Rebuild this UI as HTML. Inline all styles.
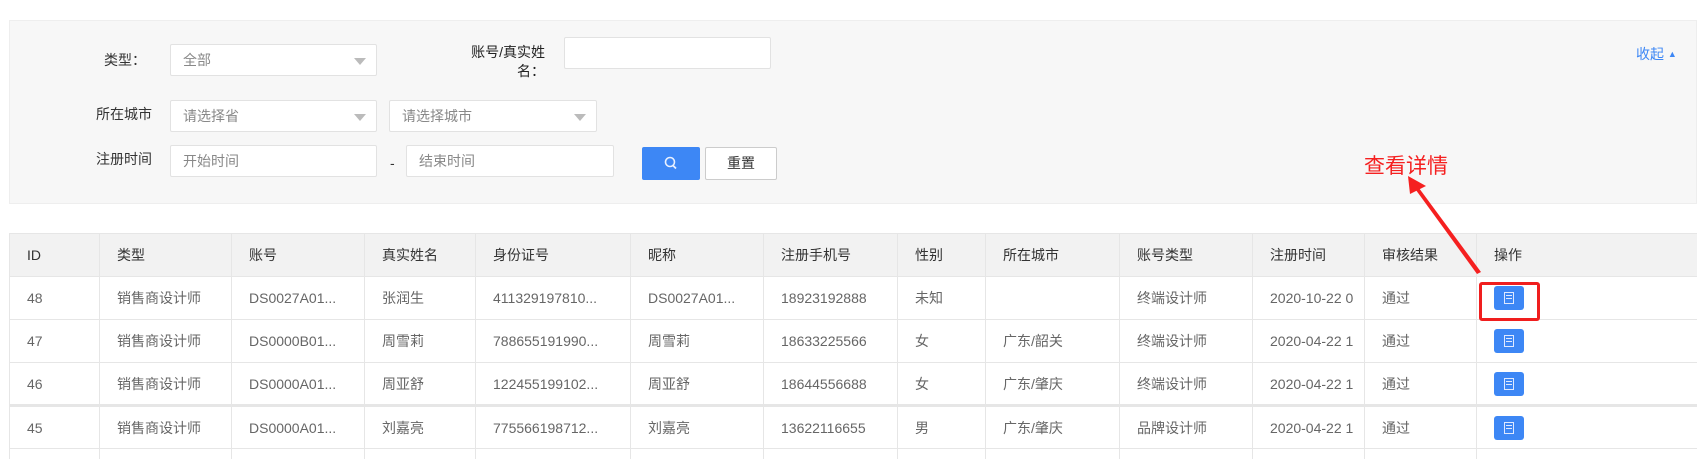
<!DOCTYPE html>
<html><head><meta charset="utf-8"><style>
*{margin:0;padding:0;box-sizing:border-box}
html{width:1702px;height:459px;overflow:hidden}
body{width:1702px;height:459px;background:#fff;font-family:"Liberation Sans","Noto Sans CJK SC",sans-serif;font-size:14px;color:#333;position:relative;overflow:hidden}
.a{position:absolute}
.panel{left:9px;top:20px;width:1688px;height:184px;background:#f7f7f7;border:1px solid #eee}
.lbl{font-size:14px;color:#333;text-align:right}
.inp{background:#fff;border:1px solid #e2e2e2;border-radius:2px;color:#888;font-size:14px;padding-left:12px;display:flex;align-items:center}
.tri{position:absolute;right:10px;top:13px;width:0;height:0;border-left:6px solid transparent;border-right:6px solid transparent;border-top:7px solid #bbb}
.wrap{position:absolute;left:9px;top:233px;width:1688px;height:226px;overflow:hidden}
table{border-collapse:collapse;table-layout:fixed;width:1688px}
td,th{height:43px;border:1px solid #e6e6e6;padding-left:17px;text-align:left;font-weight:normal;white-space:nowrap;overflow:hidden;font-size:14px}
th{background:#f2f2f2;color:#333}
td{color:#666}
tr.last td{height:12px;border-bottom:none}
tr.thick td{border-bottom:3px solid #e6e6e6}
.btn{display:inline-block;width:30px;height:24px;background:#3d87f5;border-radius:3px;position:relative;vertical-align:middle}
.btn i{position:absolute;left:10px;top:6px;width:10px;height:12px;border:1px solid #dfe9ff;background:repeating-linear-gradient(#3d87f5 0 2px,#dfe9ff 2px 3px);background-clip:content-box;padding:2px 1px}
svg{display:block}
</style></head><body>
<div class="a panel"></div>
<div class="a lbl" style="left:100px;top:50px;width:46px">类型：</div>
<div class="a inp" style="left:170px;top:44px;width:207px;height:32px">全部<span class="tri"></span></div>
<div class="a lbl" style="left:450px;top:43px;width:95px;line-height:19px;color:#222">账号/真实姓<br>名：</div>
<div class="a inp" style="left:564px;top:37px;width:207px;height:32px"></div>
<div class="a lbl" style="left:90px;top:104px;width:62px">所在城市</div>
<div class="a inp" style="left:170px;top:100px;width:207px;height:32px">请选择省<span class="tri"></span></div>
<div class="a inp" style="left:389px;top:100px;width:208px;height:32px">请选择城市<span class="tri"></span></div>
<div class="a lbl" style="left:90px;top:149px;width:62px">注册时间</div>
<div class="a inp" style="left:170px;top:145px;width:207px;height:32px">开始时间</div>
<div class="a" style="left:390px;top:155px;color:#333">-</div>
<div class="a inp" style="left:406px;top:145px;width:208px;height:32px">结束时间</div>
<div class="a" style="left:642px;top:147px;width:58px;height:33px;background:#3d87f5;border-radius:2px">
<svg width="58" height="33"><circle cx="28" cy="15" r="4.5" fill="none" stroke="#e8f0ff" stroke-width="1.6"/><line x1="31" y1="18.5" x2="34" y2="21.5" stroke="#e8f0ff" stroke-width="1.8"/></svg></div>
<div class="a" style="left:705px;top:147px;width:72px;height:33px;background:#fff;border:1px solid #ccc;border-radius:2px;text-align:center;line-height:31px;color:#333">重置</div>
<div class="a" style="left:1636px;top:44px;color:#3d87f5;font-size:14px">收起 <span style="font-size:9px;vertical-align:2px">▲</span></div>

<div class="wrap"><table>
<colgroup><col style="width:90px"><col style="width:132px"><col style="width:133px"><col style="width:111px"><col style="width:155px"><col style="width:133px"><col style="width:134px"><col style="width:88px"><col style="width:134px"><col style="width:133px"><col style="width:112px"><col style="width:112px"><col style="width:221px"></colgroup>
<tr><th>ID</th><th>类型</th><th>账号</th><th>真实姓名</th><th>身份证号</th><th>昵称</th><th>注册手机号</th><th>性别</th><th>所在城市</th><th>账号类型</th><th>注册时间</th><th>审核结果</th><th>操作</th></tr>
<tr><td>48</td><td>销售商设计师</td><td>DS0027A01...</td><td>张润生</td><td>411329197810...</td><td>DS0027A01...</td><td>18923192888</td><td>未知</td><td></td><td>终端设计师</td><td>2020-10-22 0</td><td>通过</td><td><span class="btn"><i></i></span></td></tr>
<tr><td>47</td><td>销售商设计师</td><td>DS0000B01...</td><td>周雪莉</td><td>788655191990...</td><td>周雪莉</td><td>18633225566</td><td>女</td><td>广东/韶关</td><td>终端设计师</td><td>2020-04-22 1</td><td>通过</td><td><span class="btn"><i></i></span></td></tr>
<tr class="thick"><td>46</td><td>销售商设计师</td><td>DS0000A01...</td><td>周亚舒</td><td>122455199102...</td><td>周亚舒</td><td>18644556688</td><td>女</td><td>广东/肇庆</td><td>终端设计师</td><td>2020-04-22 1</td><td>通过</td><td><span class="btn"><i></i></span></td></tr>
<tr><td>45</td><td>销售商设计师</td><td>DS0000A01...</td><td>刘嘉亮</td><td>775566198712...</td><td>刘嘉亮</td><td>13622116655</td><td>男</td><td>广东/肇庆</td><td>品牌设计师</td><td>2020-04-22 1</td><td>通过</td><td><span class="btn"><i></i></span></td></tr>
<tr class="last"><td></td><td></td><td></td><td></td><td></td><td></td><td></td><td></td><td></td><td></td><td></td><td></td><td></td></tr>
</table></div>

<div class="a" style="left:1479px;top:282px;width:61px;height:39px;border:3px solid #f01e1e;border-radius:3px"></div>
<div class="a" style="left:1364px;top:150px;color:#f52020;font-size:21px">查看详情</div>
<svg class="a" style="left:1400px;top:170px" width="90" height="110"><polygon points="81,102 77,104 13,16 16,14" fill="#f52020"/><polygon points="8,6 26,16 10,24" fill="#f52020"/></svg>
</body></html>
